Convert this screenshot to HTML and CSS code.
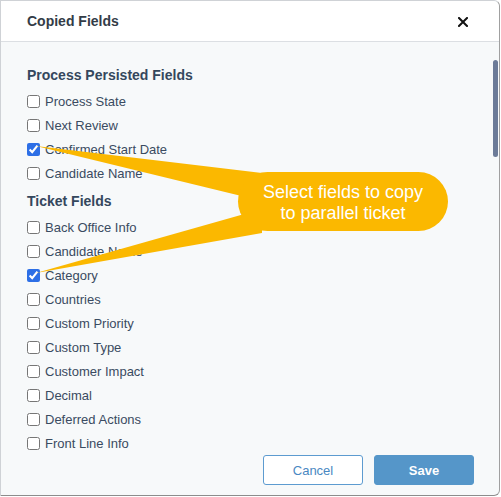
FILE: index.html
```html
<!DOCTYPE html>
<html>
<head>
<meta charset="utf-8">
<link rel="stylesheet" href="styles.css">
</head>
<body>
<div class="screen">
  <div class="modal">
    <div class="modal-header">
      <div class="title">Copied Fields</div>
      <button class="close" aria-label="Close">
        <svg width="10" height="10" viewBox="0 0 10 10"><path d="M1 1L9 9M9 1L1 9" stroke="#111" stroke-width="2" stroke-linecap="square"/></svg>
      </button>
    </div>
    <div class="modal-body">
      <div class="section-title">Process Persisted Fields</div>
      <label class="row"><input type="checkbox"><span>Process State</span></label>
      <label class="row"><input type="checkbox"><span>Next Review</span></label>
      <label class="row"><input type="checkbox" checked><span>Confirmed Start Date</span></label>
      <label class="row"><input type="checkbox"><span>Candidate Name</span></label>
      <div class="section-title second">Ticket Fields</div>
      <label class="row"><input type="checkbox"><span>Back Office Info</span></label>
      <label class="row"><input type="checkbox"><span>Candidate Name</span></label>
      <label class="row"><input type="checkbox" checked><span>Category</span></label>
      <label class="row"><input type="checkbox"><span>Countries</span></label>
      <label class="row"><input type="checkbox"><span>Custom Priority</span></label>
      <label class="row"><input type="checkbox"><span>Custom Type</span></label>
      <label class="row"><input type="checkbox"><span>Customer Impact</span></label>
      <label class="row"><input type="checkbox"><span>Decimal</span></label>
      <label class="row"><input type="checkbox"><span>Deferred Actions</span></label>
      <label class="row"><input type="checkbox"><span>Front Line Info</span></label>
    </div>
    <div class="modal-footer">
      <button class="btn btn-cancel">Cancel</button>
      <button class="btn btn-save">Save</button>
    </div>
    <div class="scroll-thumb"></div>
  </div>
  <div class="annotation">
    <svg class="pointers" width="501" height="497" viewBox="0 0 501 497">
      <polygon points="36,146 262,173 262,201" fill="#fbb800"/>
      <polygon points="36,273 262,209 262,233" fill="#fbb800"/>
    </svg>
    <div class="bubble">Select fields to copy<br>to parallel ticket</div>
  </div>
</div>
</body>
</html>
```
FILE: styles.css
```css
html, body {
  margin: 0;
  padding: 0;
  background: #ffffff;
}
body {
  font-family: "Liberation Sans", Arial, sans-serif;
}
.screen {
  position: relative;
  width: 501px;
  height: 497px;
}
.modal {
  position: relative;
  box-sizing: border-box;
  width: 500px;
  height: 496px;
  border: 1px solid #cfd2d6;
  border-right-color: #a0a0a0;
  border-bottom-color: #8c8c8c;
  border-radius: 0 6px 6px 0;
  background: #f7f9fa;
  display: flex;
  flex-direction: column;
  overflow: hidden;
}
.modal-header {
  height: 40px;
  flex: none;
  background: #ffffff;
  border-bottom: 1px solid #dcdfe3;
  display: flex;
  align-items: center;
  justify-content: space-between;
  padding: 0 26px 0 26px;
  border-radius: 0 6px 0 0;
}
.title {
  font-size: 14px;
  font-weight: bold;
  color: #333c47;
}
.close {
  border: none;
  background: transparent;
  padding: 0;
  width: 10px;
  height: 10px;
  display: flex;
  margin-right: 5px;
  margin-top: 1px;
}
.modal-body {
  flex: none;
  height: 413px;
  overflow: hidden;
  padding: 24px 26px 0 26px;
  box-sizing: border-box;
}
.section-title {
  font-size: 14px;
  line-height: 18px;
  font-weight: bold;
  color: #34475d;
  margin-bottom: 5px;
}
.section-title.second {
  margin-top: 7px;
}
.row {
  display: flex;
  align-items: center;
  height: 24px;
  font-size: 13px;
  color: #3a4b61;
}
.row input {
  width: 13px;
  height: 13px;
  margin: 0 5px 0 0;
  accent-color: #2d6fe6;
}
.modal-footer {
  flex: 1;
  display: flex;
  justify-content: flex-end;
  align-items: flex-start;
  gap: 11px;
  padding: 0 25px 0 0;
}
.btn {
  width: 100px;
  height: 30px;
  border-radius: 3px;
  font-family: "Liberation Sans", Arial, sans-serif;
  font-size: 13px;
  cursor: pointer;
}
.btn-cancel {
  background: #ffffff;
  border: 1px solid #5d9bd0;
  color: #4a88c2;
}
.btn-save {
  background: #5596c9;
  border: 1px solid #5596c9;
  color: #ffffff;
  font-weight: bold;
}
.scroll-thumb {
  position: absolute;
  right: 1px;
  top: 59px;
  width: 5px;
  height: 97px;
  border-radius: 3px;
  background: #6c7b98;
}
.annotation {
  position: absolute;
  left: 0;
  top: 0;
  width: 501px;
  height: 497px;
  pointer-events: none;
}
.pointers {
  position: absolute;
  left: 0;
  top: 0;
}
.bubble {
  position: absolute;
  left: 238px;
  top: 172px;
  width: 210px;
  height: 59px;
  border-radius: 30px;
  background: #fbb800;
  color: #ffffff;
  font-size: 18px;
  line-height: 21px;
  text-align: center;
  display: flex;
  align-items: center;
  justify-content: center;
  padding-top: 2px;
  box-sizing: border-box;
}
```
